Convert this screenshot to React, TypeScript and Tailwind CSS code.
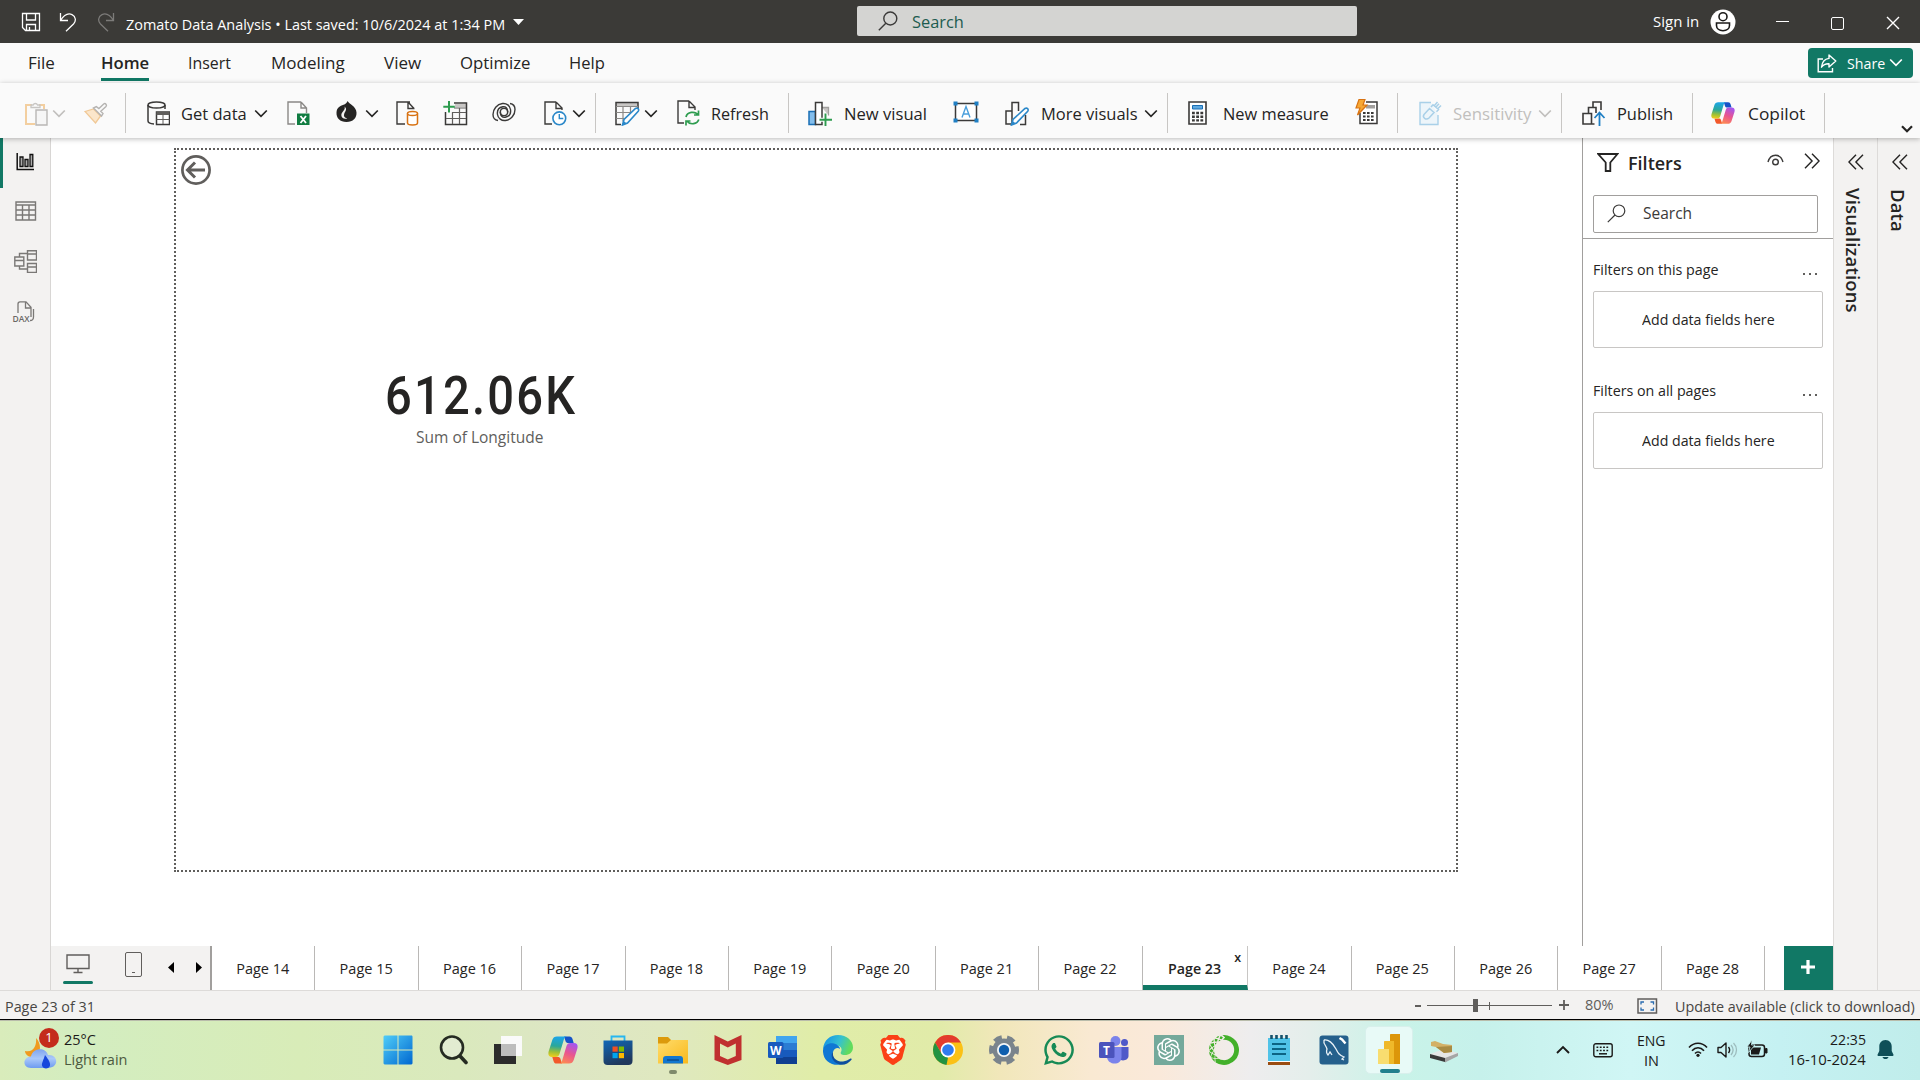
import React, { useLayoutEffect, useRef, useState } from "react";
import { SiOpenai, SiBrave, SiAnaconda } from "react-icons/si";
import { FaWhatsapp } from "react-icons/fa";

/* Text squeezed or stretched to the width its class gives. */
function T({ className = "", children }: { className?: string; children: React.ReactNode }) {
  const outer = useRef<HTMLSpanElement>(null);
  const inner = useRef<HTMLSpanElement>(null);
  const [k, setK] = useState(1);
  useLayoutEffect(() => {
    if (outer.current && inner.current) setK(outer.current.clientWidth / inner.current.offsetWidth);
  }, []);
  return (
    <span ref={outer} className={"block shrink-0 whitespace-nowrap " + className}>
      <span ref={inner} className="inline-block origin-left" style={{ transform: `scaleX(${k})` }}>
        {children}
      </span>
    </span>
  );
}

type IconProps = { w: number; h: number; className?: string; children: React.ReactNode };
function Svg({ w, h, className = "", children }: IconProps) {
  return (
    <svg width={w} height={h} viewBox={`0 0 ${w} ${h}`} fill="none" className={"block shrink-0 " + className}>
      {children}
    </svg>
  );
}

function Chevron({ className = "", color = "#252423" }: { className?: string; color?: string }) {
  return (
    <Svg w={14} h={9} className={className}>
      <path d="M1.2 1.5 7 7.3l5.8-5.8" stroke={color} strokeWidth="1.7" />
    </Svg>
  );
}
function Sep({ className = "" }: { className?: string }) {
  return <div className={"h-10 w-px shrink-0 bg-[#c8c6c4] " + className} />;
}

function CopilotIcon({ size, id, className = "" }: { size: number; id: string; className?: string }) {
  return (
    <svg width={size} height={size} viewBox="0 0 30 30" className={"block shrink-0 " + className}>
      <defs>
        <linearGradient id={id + "a"} x1="0.3" y1="0" x2="0.2" y2="1">
          <stop offset="0" stopColor="#1ca5e8" />
          <stop offset="0.45" stopColor="#2aa79b" />
          <stop offset="0.75" stopColor="#9fc035" />
          <stop offset="1" stopColor="#f5cf1a" />
        </linearGradient>
        <linearGradient id={id + "b"} x1="0.7" y1="0" x2="0.3" y2="1">
          <stop offset="0" stopColor="#a456f0" />
          <stop offset="0.5" stopColor="#e9558f" />
          <stop offset="1" stopColor="#fd8a52" />
        </linearGradient>
      </defs>
      <path d="M16 1.5h5.4c1.8 0 2.6 1 3.1 2.6l1.2 4h-5.2c-1.6 0-2.6-.5-3-2z" fill="#1652c8" />
      <path d="M14 28.5H8.6c-1.8 0-2.6-1-3.1-2.6l-1.2-4h5.2c1.6 0 2.6.5 3 2z" fill="#f2592b" />
      <path d="M9 1.5h10c-1.700 0-2.500 1-3 2.600L11.500 19c-.6 2-1.800 3-3.700 3H4C.8 22-.2 19.600.7 16.300L4.300 5C5.100 2.600 6.500 1.500 9 1.500z" fill={`url(#${id}a)`} />
      <path d="M21 28.500H11c1.700 0 2.500-1 3-2.600L18.500 11c.6-2 1.800-3 3.700-3H26c3.200 0 4.200 2.400 3.300 5.700L25.700 25c-.8 2.400-2.200 3.500-4.700 3.500z" fill={`url(#${id}b)`} />
    </svg>
  );
}

function TitleBar() {
  return (
    <header className="flex h-[43px] shrink-0 items-center bg-[#3b3a37] text-white">
      <Svg w={20} h={20} className="ml-[21px]">
        <path d="M1.500 1.500h17v17h-14l-3-3zM5.500 1.500v6.500h9V1.500M5.500 18.500v-6h9v6M8.500 18v-3" stroke="#fff" strokeWidth="1.300" />
      </Svg>
      <Svg w={18} h={20} className="ml-[18px]">
        <path d="M1.500 1v7.500H9M1.500 8.500C5 3 9 .8 13 2.600c4 2 4.300 6.500 1.500 9.400L7 19.300" stroke="#fff" strokeWidth="1.300" />
      </Svg>
      <Svg w={18} h={20} className="ml-5">
        <path d="M16.500 1v7.500H9M16.500 8.500C13 3 9 .8 5 2.600c-4 2-4.300 6.500-1.500 9.400L11 19.300" stroke="#7c7b79" strokeWidth="1.300" />
      </Svg>
      <T className="mt-[7px] ml-[11px] w-[379px] text-[14.5px]">Zomato Data Analysis • Last saved: 10/6/2024 at 1:34 PM</T>
      <Svg w={11} h={6} className="ml-2">
        <path d="M0 0h11L5.500 6z" fill="#fff" />
      </Svg>
      <div className="mb-px ml-[333px] flex h-[30px] w-[500px] shrink-0 items-center rounded-[2px] bg-[#d4d4d2]">
        <Svg w={20} h={20} className="ml-[21px]">
          <circle cx="12.300" cy="7.500" r="6.500" stroke="#3b3a39" strokeWidth="1.400" />
          <path d="M7.800 12.200.8 19.300" stroke="#3b3a39" strokeWidth="1.400" />
        </Svg>
        <T className="mt-px ml-[14px] w-[52px] text-[17px] text-[#1d5c4f]">Search</T>
      </div>
      <T className="ml-[296px] w-[46px] text-[15px]">Sign in</T>
      <Svg w={26} h={26} className="ml-[11px]">
        <circle cx="13" cy="13" r="12.500" fill="#fff" />
        <circle cx="13" cy="7.700" r="4" stroke="#1b1a19" strokeWidth="1.600" />
        <path d="M6.500 14h13v2.500c0 3-2.600 5.200-6.500 5.200s-6.500-2.200-6.500-5.200z" stroke="#1b1a19" strokeWidth="1.600" />
      </Svg>
      <div className="ml-10 h-[1.500px] w-[13px] shrink-0 bg-white" />
      <div className="mt-[3px] ml-[42px] h-[13px] w-[13px] shrink-0 rounded-[2px] border-[1.500px] border-white" />
      <Svg w={14} h={14} className="mt-[3px] ml-[42px]">
        <path d="M1 1l12 12M13 1 1 13" stroke="#fff" strokeWidth="1.400" />
      </Svg>
    </header>
  );
}

function MenuBar() {
  return (
    <nav className="flex h-10 shrink-0 bg-[#fafafa] pt-[8px] text-[17px] leading-[24px] text-[#252423]">
      <T className="ml-7 w-[27px]">File</T>
      <div className="ml-[46px] h-[30px] border-b-[3px] border-[#117865] font-semibold">
        <T className="w-[48px]">Home</T>
      </div>
      <T className="ml-[39px] w-[43px]">Insert</T>
      <T className="ml-10 w-[74px]">Modeling</T>
      <T className="ml-[39px] w-[37px]">View</T>
      <T className="ml-[39px] w-[71px]">Optimize</T>
      <T className="ml-[38px] w-[36px]">Help</T>
      <button className="-mt-[3px] mr-[7px] ml-auto flex h-[30px] w-[105px] items-center rounded-[4px] bg-[#117865] text-[15px] text-white">
        <Svg w={20} h={19} className="ml-[9px]">
          <path d="M6 5H1.200v12.800h14.300V14" stroke="#fff" strokeWidth="1.400" />
          <path d="M12 1l6.800 6L12 13V9.800c-3.300-.2-5.600.8-7.500 3.400C5 8.500 7.500 5 12 4.400z" stroke="#fff" strokeWidth="1.400" strokeLinejoin="round" />
        </Svg>
        <T className="-mt-px ml-[10px] w-[38px] text-left">Share</T>
        <Chevron className="-mt-px ml-[4px]" color="#fff" />
      </button>
    </nav>
  );
}

function Toolbar() {
  return (
    <div className="relative z-10 flex h-[55px] shrink-0 items-center bg-[#fafafa] pt-[5px] text-[17px] text-[#252423] shadow-[0_1px_5px_rgba(0,0,0,0.28)]">
      <Svg w={23} h={25} className="ml-[25px]">
        <path d="M7 4H1v19h9M14 4h5v4" stroke="#f3cfa0" strokeWidth="2" />
        <path d="M6 6.500h9V4h-2.500a2.300 2.300 0 0 0-4.300 0H6z" stroke="#c8c6c4" strokeWidth="1.300" />
        <path d="M11 9h11v15H11z" fill="#f6f6f6" stroke="#b9b7b5" strokeWidth="1.400" />
      </Svg>
      <Chevron className="ml-[4px]" color="#c1bfbd" />
      <Svg w={24} h={22} className="ml-[18px]">
        <path d="M1 9.500 9.500 7l7 7-5 7z" fill="#fbe6cb" stroke="#f0c896" strokeWidth="1.300" />
        <path d="m9.500 6 8 8 1.500-2.500-2.200-2.200L22 4.500c1.300-1.500-.6-3.800-2.300-2.500l-4.800 4.600-2.600-2z" fill="#fafafa" stroke="#b5b3b1" strokeWidth="1.400" />
      </Svg>
      <Sep className="ml-[17px]" />
      <Svg w={23} h={25} className="ml-[21px]">
        <ellipse cx="9.500" cy="4" rx="8.500" ry="3" stroke="#3b3a39" strokeWidth="1.500" />
        <path d="M1 4v16c0 1.500 2.500 2.800 6 3M18 4v4" stroke="#3b3a39" strokeWidth="1.500" />
        <path d="M9.500 11h13v12.500h-13z" fill="#fff" stroke="#3b3a39" strokeWidth="1.500" />
        <path d="M9.500 11h13v3h-13z" fill="#605e5c" />
        <path d="M16 14v9M9.500 18.500h13" stroke="#605e5c" />
      </Svg>
      <T className="mt-[2px] ml-[11px] w-[66px]">Get data</T>
      <Chevron className="ml-[7px]" />
      <Svg w={23} h={25} className="ml-[19px]">
        <path d="M14 1H1v22h7M14 1v6h5.500M14 1l5.500 6v5" stroke="#8a8886" strokeWidth="1.400" />
        <path d="M10 12.500h12.500V24H10z" fill="#107c41" />
        <path d="m13.500 15 5.500 7M19 15l-5.500 7" stroke="#fff" strokeWidth="1.800" />
      </Svg>
      <Svg w={21} h={22} className="-mt-[2px] ml-[26px]">
        <path d="M11.500 0c1.500 3 8.500 5 9 11.500.3 5.500-3.500 9.500-10 9.500S.2 17 .5 11.500C.8 6.500 4 5 7.500 3.800 9.500 3 11 2 11.500 0z" fill="#252423" />
        <path d="M8.500 5.500c1.500 3.500-3 5-3.200 8.500-.1 3 3 4.500 6 3.500-3-.7-4-2.500-3-5C9.500 10 11.500 8 8.500 5.500z" fill="#f3f2f1" />
      </Svg>
      <Chevron className="ml-2" />
      <Svg w={23} h={25} className="ml-[17px]">
        <path d="M14 1H1v22h8M12 1v6.500h6.500M12 1l6 6.500" stroke="#3b3a39" strokeWidth="1.400" />
        <path d="M11.500 12.500V22c0 2.600 10 2.600 10 0v-9.500" fill="#fff" stroke="#d87212" strokeWidth="1.500" />
        <ellipse cx="16.500" cy="12.500" rx="5" ry="2" fill="#fff" stroke="#d87212" strokeWidth="1.500" />
      </Svg>
      <Svg w={25} h={25} className="ml-[24px]">
        <path d="M12 3h11v3H12z" fill="#c8c6c4" />
        <path d="M11 2h12.500v21.500h-21V11" stroke="#3b3a39" strokeWidth="1.500" />
        <path d="M11 7h12M9 11.500h14M3 17.500h20M9.500 11v12M16.500 7v16" stroke="#605e5c" strokeWidth="1.200" />
        <path d="M6 0v11.500M.3 5.800h11.500" stroke="#2e9c4f" strokeWidth="2" />
      </Svg>
      <Svg w={24} h={20} className="-mt-[3px] ml-[24px]">
        <circle cx="12" cy="10" r="3.700" stroke="#3b3a39" strokeWidth="1.500" />
        <path d="M15.700 10c0-4-2-5.800-5-5.300C6.500 5.500 5 9 5.500 12.500c.5 4 4 6.500 8 6 5.500-.7 9.500-5.500 9.500-11 0-3.500-1.800-5.500-5-6" stroke="#3b3a39" strokeWidth="1.400" />
        <path d="M8.300 10c0 4 2 5.800 5 5.300 4.200-.8 5.700-4.300 5.200-7.800-.5-4-4-6.500-8-6C5 2.200 1 7 1 12.500c0 3.500 1.800 5.500 5 6" stroke="#3b3a39" strokeWidth="1.400" />
      </Svg>
      <Svg w={23} h={25} className="ml-[28px]">
        <path d="M12 1H1v22h7M12 1v6.500h5.500M12 1l6 6v2" stroke="#3b3a39" strokeWidth="1.400" />
        <circle cx="15.300" cy="17.300" r="6.400" fill="#fff" stroke="#2b88c9" strokeWidth="1.600" />
        <path d="M15.300 13v4.500h4" stroke="#2b88c9" strokeWidth="1.400" />
      </Svg>
      <Chevron className="ml-[5px]" />
      <Sep className="ml-[9px]" />
      <Svg w={25} h={25} className="ml-[19px]">
        <TableEdit />
      </Svg>
      <Chevron className="ml-[4px]" />
      <Svg w={23} h={26} className="ml-[19px]">
        <path d="M12 1H1v22h6M12 1v6.500h5.500M12 1l6 6v3" stroke="#3b3a39" strokeWidth="1.400" />
        <path d="M9 17c1-5 9-6.500 12-2M21.500 10.500V15H17M21.800 19.500c-1.500 4.500-8.500 6-12 1.500M9 25.500V21h4.500" stroke="#2e9c4f" strokeWidth="1.700" />
      </Svg>
      <T className="mt-[2px] ml-[11px] w-[58px]">Refresh</T>
      <Sep className="ml-[19px]" />
      <Svg w={25} h={25} className="ml-[19px]">
        <path d="M1 10.500h6.500v13H1z" fill="#83beec" stroke="#1a6fb5" strokeWidth="1.500" />
        <path d="M14 6.500h6.500v8" fill="#c8c6c4" stroke="#a19f9d" strokeWidth="1.300" />
        <path d="M7.500 1.500H14v22H7.500z" fill="#fff" stroke="#3b3a39" strokeWidth="1.500" />
        <path d="M17.500 12.500V25M11.500 18.700h13" stroke="#fafafa" strokeWidth="4" />
        <path d="M17.500 12.500V25M11.500 18.700H24" stroke="#2e9c4f" strokeWidth="1.900" />
      </Svg>
      <T className="mt-[2px] ml-[11px] w-[83px]">New visual</T>
      <Svg w={26} h={22} className="-mt-[2px] ml-[26px]">
        <path d="M2.500 2.500h21v17h-21z" fill="#fff" stroke="#3b3a39" strokeWidth="1.500" />
        <path d="M.5.5h4v4h-4zM21.500.5h4v4h-4zM.5 17.500h4v4h-4zM21.500 17.500h4v4h-4z" fill="#1f7fc4" />
        <path d="M9 16.500 13 5.500l4 11M10.300 13h5.400" stroke="#4a9edb" strokeWidth="1.400" />
      </Svg>
      <Svg w={24} h={25} className="ml-[26px]">
        <path d="M7 10H1v13h6" stroke="#3b3a39" strokeWidth="1.500" />
        <path d="M7 23V1.500h6.500V10M15 23.500h5.500V14" stroke="#3b3a39" strokeWidth="1.500" />
        <path d="m6.500 24 1.500-5.500L20 7.500c2-1.300 4 .8 2.700 2.800L11.500 22z" fill="#fff" stroke="#2b88c9" strokeWidth="1.600" />
        <path d="m6.500 24 1-4 3.500 2.500z" fill="#2b88c9" />
      </Svg>
      <T className="mt-[2px] ml-[12px] w-[97px]">More visuals</T>
      <Chevron className="ml-[6px]" />
      <Sep className="ml-[9px]" />
      <Svg w={19} h={24} className="ml-[20px]">
        <Calc />
      </Svg>
      <T className="mt-[2px] ml-[16px] w-[106px]">New measure</T>
      <Svg w={23} h={26} className="-mt-[2px] ml-[26px]">
        <path d="M11 3h11v21.500H5V14" fill="#fff" stroke="#3b3a39" strokeWidth="1.500" />
        <path d="M11 6h9v3.500h-9z" fill="#a19f9d" />
        <path d="M8 14h11M8 17.500h11M8 21h11" stroke="#3b3a39" strokeWidth="2.200" strokeDasharray="2.600 1.400" />
        <path d="M4 .5h6L8 6h4L2.500 16 5 9H1z" fill="#f7a834" stroke="#d87212" strokeWidth="1.200" />
      </Svg>
      <Sep className="ml-[19px]" />
      <Svg w={23} h={25} className="ml-[21px]">
        <path d="M12 1.500H1v22h18V14" fill="#edf5fa" stroke="#a9d0e8" strokeWidth="1.400" />
        <path d="m5 13.500 5.500-6 4.500 4-5 5.500c-3 2.500-7-.5-5-3.500zM12 6l2-2.300 5.500 4.800-2 2.300M15.500 4.500l3-3.500M19 7.500l3-3M17 6l3-3.300" stroke="#a9d0e8" strokeWidth="1.500" />
      </Svg>
      <T className="mt-[2px] ml-[11px] w-[78px] text-[#c1bfbd]">Sensitivity</T>
      <Chevron className="ml-[7px]" color="#c1bfbd" />
      <Sep className="ml-[9px]" />
      <Svg w={24} h={25} className="ml-5">
        <path d="M1 12.500h8.500V23H1zM6.500 12V6.500H14V12M11 6V1h8v8M9.500 23h3" stroke="#3b3a39" strokeWidth="1.600" />
        <path d="M17.500 25V12M12.500 17l5-5.500 5 5.500" stroke="#1f7fc4" strokeWidth="1.800" />
      </Svg>
      <T className="mt-[2px] ml-[11px] w-[56px]">Publish</T>
      <Sep className="ml-[19px]" />
      <CopilotIcon size={24} id="cr" className="ml-[18px]" />
      <T className="mt-[2px] ml-[13px] w-[57px]">Copilot</T>
      <Sep className="ml-[19px]" />
      <Svg w={12} h={8} className="mt-[31px] ml-[76px]">
        <path d="M1 1.200 6 6.200l5-5" stroke="#252423" strokeWidth="2.200" />
      </Svg>
    </div>
  );
}

function TableEdit() {
  return (
    <>
      <path d="M1 1.500h22v4H1z" fill="#c8c6c4" />
      <path d="M23 8V1.500H1V23.500h5" stroke="#3b3a39" strokeWidth="1.500" />
      <path d="M1 5.500h22M1 11.500h15M1 17.500h9M8 5.500v15M15.500 5.500v7" stroke="#8a8886" strokeWidth="1.200" />
      <path d="m7.500 24 1.500-5.500L20.500 7.500c2-1.300 4 .8 2.700 2.800L12.500 22z" fill="#fff" stroke="#2b88c9" strokeWidth="1.600" />
      <path d="m7.500 24 1-4 3.500 2.500z" fill="#2b88c9" />
    </>
  );
}
function Calc() {
  return (
    <>
      <path d="M1 1h17v22H1z" fill="#fff" stroke="#3b3a39" strokeWidth="1.600" />
      <path d="M4.500 4.500h10v3.500h-10z" fill="#5ea9e0" stroke="#1a6fb5" />
      <path d="M4 12h11.500M4 15.700h11.500M4 19.400h11.500" stroke="#3b3a39" strokeWidth="2.400" strokeDasharray="2.800 1.400" />
    </>
  );
}

function Rail() {
  return (
    <aside className="flex w-[51px] shrink-0 flex-col border-r border-[#d8d6d4] bg-[#f3f2f1]">
      <div className="flex h-[50px] shrink-0 border-l-[3px] border-[#117865]">
        <Svg w={19} h={19} className="mt-[14px] ml-[13px]">
          <path d="M1.200 1v16.500H18" stroke="#111" strokeWidth="1.500" />
          <path d="M4 5h3v9.500H4zM9 7.500h3v7H9zM14 2.500h2.800v12H14z" fill="#aaa" stroke="#111" strokeWidth="1.300" />
        </Svg>
      </div>
      <Svg w={22} h={20} className="mt-[13px] ml-[15px]">
        <path d="M1 1h19.500v18H1zM1 4h19.500M1 9h19.500M1 14h19.500M7.500 4v15M14 4v15" stroke="#7a7876" strokeWidth="1.400" />
      </Svg>
      <Svg w={23} h={23} className="mt-[29px] ml-[14px]">
        <path d="M.8 7h9v9h-9zM.8 10.500h9M13.500.8h9V10h-9zM13.500 4h9M13.500 13.500h9v9h-9zM13.500 17h9M5.500 7V3.500h8M5.500 16v3h8" stroke="#7a7876" strokeWidth="1.400" />
      </Svg>
      <Svg w={24} h={22} className="mt-[28px] ml-[12px]">
        <path d="M6 12V3c0-1.500.8-2.200 2-2.200h6l5 5.500V16M13.500 1v6H19M21.500 8v8c0 2-1.500 3.500-3.500 3.500" stroke="#7a7876" strokeWidth="1.300" />
        <text x="0.500" y="20.500" fontSize="8.500" textLength="17" fontFamily="Open Sans" fontWeight="600" fill="#6a6866">DAX</text>
      </Svg>
    </aside>
  );
}

function Canvas() {
  return (
    <main className="flex flex-1 bg-white pt-[10px] pl-[123px]">
      <section className="h-[724px] w-[1284px] border-2 border-dotted border-[#605e5c]">
        <Svg w={30} h={30} className="mt-[5px] ml-[5px]">
          <circle cx="15" cy="15" r="13.600" stroke="#605e5c" strokeWidth="2.700" />
          <path d="M24 15H6.500M14 7.500 6.500 15l7.500 7.500" stroke="#605e5c" strokeWidth="3" />
        </Svg>
        <div className="mt-[179px] ml-[184px] flex w-[242px] flex-col items-center">
          <div className="font-['Roboto'] text-[53px] leading-[64px] font-medium tracking-[2.500px] text-[#252423]">
            <T className="w-[192px]">612.06K</T>
          </div>
          <T className="-mt-[2px] mr-[3px] w-[127px] text-[15.500px] leading-[22px] text-[#605e5c]">Sum of Longitude</T>
        </div>
      </section>
    </main>
  );
}

function DoubleChevron({ left = false, className = "" }: { left?: boolean; className?: string }) {
  return (
    <Svg w={16} h={16} className={className}>
      <path d={left ? "M8 .7.9 8 8 15.300M15 .7 7.900 8l7.100 7.300" : "M8 .7 15.100 8 8 15.300M1 .7 8.100 8 1 15.300"} stroke="#252423" strokeWidth="1.400" />
    </Svg>
  );
}

function FilterGroup({ title, top }: { title: string; top: string }) {
  return (
    <div className={top}>
      <div className="flex h-[22px] items-center justify-between pr-[5px] text-[14.5px] text-[#252423]">
        <T className={title === "Filters on this page" ? "w-[125px]" : "w-[123px]"}>{title}</T>
        <div className="mt-[7px] flex gap-1 pr-px">
          <i className="size-[2px] bg-[#605e5c]" />
          <i className="size-[2px] bg-[#605e5c]" />
          <i className="size-[2px] bg-[#605e5c]" />
        </div>
      </div>
      <div className="mt-[10px] flex h-[57px] items-center justify-center rounded-[2px] border border-[#c8c6c4] pt-px text-[14.5px] text-[#252423]">
        <T className="w-[133px]">Add data fields here</T>
      </div>
    </div>
  );
}

function Filters() {
  return (
    <aside className="w-[251px] shrink-0 border-l border-[#a19f9d] bg-white">
      <div className="flex h-[57px] items-start pt-[15px] pl-[14px]">
        <Svg w={22} h={19}>
          <path d="M1.200 1h19.300l-7.200 8.500V18H8.700V9.500z" stroke="#252423" strokeWidth="1.800" />
        </Svg>
        <T className="-mt-[3px] ml-[9px] w-[54px] text-[18px] leading-[26px] font-semibold text-[#252423]">Filters</T>
        <Svg w={17} h={12} className="mt-px ml-[85px]">
          <path d="M1 8C3.500-1 13.500-1 16 8" stroke="#3b3a39" strokeWidth="1.400" />
          <circle cx="8.500" cy="8" r="2.800" stroke="#3b3a39" strokeWidth="1.400" />
        </Svg>
        <DoubleChevron className="ml-5" />
      </div>
      <div className="h-[44px] border-b border-[#a19f9d] pl-[10px]">
        <div className="flex h-[38px] w-[225px] items-center rounded-[2px] border border-[#a19f9d]">
          <Svg w={19} h={19} className="-mt-px ml-[13px]">
            <circle cx="12" cy="6.800" r="5.800" stroke="#3b3a39" strokeWidth="1.200" />
            <path d="M8 11 .8 18.200" stroke="#3b3a39" strokeWidth="1.200" />
          </Svg>
          <T className="-mt-px ml-[17px] w-[49px] text-[15.500px] text-[#3b3a39]">Search</T>
        </div>
      </div>
      <div className="pr-[10px] pl-[10px]">
        <FilterGroup title="Filters on this page" top="pt-5" />
        <FilterGroup title="Filters on all pages" top="pt-[32px]" />
      </div>
    </aside>
  );
}

const PAGES = [14, 15, 16, 17, 18, 19, 20, 21, 22, 23, 24, 25, 26, 27, 28];

function Tabs() {
  return (
    <div className="flex h-[44px] shrink-0 bg-white text-[14.5px] text-[#252423]">
      <div className="flex w-[161px] shrink-0 border-r-2 border-[#a19f9d] bg-[#f3f2f1]">
        <div className="ml-[12px] flex w-[30px] flex-col items-center">
          <Svg w={24} h={20} className="mt-[8px]">
            <path d="M1 1h22v13.500H1zM12 14.500v4M7.500 18.500h9" stroke="#605e5c" strokeWidth="1.400" />
          </Svg>
          <div className="mt-[7px] h-[3px] w-[30px] rounded-full bg-[#117865]" />
        </div>
        <div className="mt-[6px] ml-[32px] flex h-[25px] w-[17px] items-end justify-center rounded-[2px] border-[1.500px] border-[#605e5c] pb-[3px]">
          <div className="h-[1.500px] w-[3px] bg-[#605e5c]" />
        </div>
        <Svg w={6} h={11} className="mt-[16px] ml-[26px]">
          <path d="M6 0v11L0 5.500z" fill="#000" />
        </Svg>
        <Svg w={6} h={11} className="mt-[16px] ml-[22px]">
          <path d="M0 0v11l6-5.500z" fill="#000" />
        </Svg>
      </div>
      {PAGES.map((n) =>
        n === 23 ? (
          <div key={n} className="relative flex w-[105.500px] shrink-0 justify-center border-r border-b-[5px] border-r-[#c8c6c4] border-b-[#117865] pt-[12px] pr-px leading-[22px] font-semibold">
            <T className="w-[53px]">Page 23</T>
            <span className="absolute top-[2px] right-[6px] text-[12.500px] leading-[20px]">x</span>
          </div>
        ) : (
          <div key={n} className="flex w-[103.420px] shrink-0 justify-center border-r border-[#bab8b6] pt-[12px] pr-px leading-[22px]">
            <T className="w-[53px]">Page {n}</T>
          </div>
        )
      )}
      <div className="ml-auto flex w-[49px] shrink-0 items-center justify-center bg-[#117865] pr-px">
        <Svg w={14} h={14} className="-mt-[3px]">
          <path d="M7 0v14M0 7h14" stroke="#fff" strokeWidth="3.200" />
        </Svg>
      </div>
    </div>
  );
}

function Collapsed({ label, className }: { label: React.ReactNode; className: string }) {
  return (
    <aside className={"flex shrink-0 flex-col border-l border-[#dddbd9] bg-[#f3f2f1] text-[#252423] " + className}>
      <DoubleChevron left className="mt-[16px] ml-[13.500px]" />
      {label}
    </aside>
  );
}

function StatusBar() {
  return (
    <footer className="flex h-[29px] shrink-0 items-center border-t border-[#dddbd9] bg-[#f3f2f1] pt-[3px] text-[15px] text-[#605e5c]">
      <T className="ml-[5px] w-[90px] text-[#484644]">Page 23 of 31</T>
      <div className="-mt-[2px] ml-[1320px] h-[2px] w-[6px] shrink-0 bg-[#605e5c]" />
      <div className="-mt-[2px] ml-[6px] flex h-[14px] w-[125px] shrink-0 items-center">
        <div className="h-px w-[46px] bg-[#605e5c]" />
        <div className="h-[13px] w-[5px] bg-[#605e5c]" />
        <div className="h-px w-[11px] bg-[#605e5c]" />
        <div className="h-[8px] w-px bg-[#605e5c]" />
        <div className="h-px flex-1 bg-[#605e5c]" />
      </div>
      <Svg w={10} h={10} className="-mt-[3px] ml-[7px]">
        <path d="M5 0v10M0 5h10" stroke="#605e5c" strokeWidth="1.800" />
      </Svg>
      <T className="-mt-[4px] ml-4 w-[29px]">80%</T>
      <Svg w={21} h={16} className="-mt-px ml-[23px]">
        <path d="M1 1h18.500v14H1z" stroke="#605e5c" strokeWidth="1.500" />
        <path d="M4 6.500V4h3M13.500 4h3v2.500M16.500 9.500V12h-3M7 12H4V9.500" stroke="#2b6cb0" strokeWidth="1.300" />
      </Svg>
      <T className="ml-[17px] w-[240px] text-[#484644]">Update available (click to download)</T>
    </footer>
  );
}

function Weather() {
  return (
    <div className="flex w-[360px] shrink-0 items-center pl-[24px]">
      <div className="relative -mt-[2px]">
        <Svg w={34} h={42}>
          <defs>
            <linearGradient id="cloud" x1="0" y1="0" x2="0" y2="1">
              <stop offset="0" stopColor="#7fa4ee" />
              <stop offset="0.500" stopColor="#a9c8fa" />
              <stop offset="1" stopColor="#6d9bf0" />
            </linearGradient>
          </defs>
          <path d="M12 9c5 5 6 14-1 19C6 29 1 26 1 22c8 2 12-5 11-13z" fill="#f09a1e" />
          <path d="M7 39c-9 0-8.500-11 0-11.500C9 18 22 18 24 26c10-1 11.500 12 1 13z" fill="url(#cloud)" />
          <path d="M21 26c4 5 5.500 8 5 10.500-1 4-7 4-8 0-.4-2.500 1.500-5.500 3-10.500z" fill="#1747dc" />
        </Svg>
        <span className="absolute -top-px left-[15px] flex size-5 items-center justify-center rounded-full bg-[#c42b1c] text-[13px] text-white">1</span>
      </div>
      <div className="-mt-[2px] ml-[6px] text-[14.5px] leading-5 text-[#1b1a19]">
        <T className="w-[32px]">25°C</T>
        <T className="w-[63px] text-[#4c5a40]">Light rain</T>
      </div>
    </div>
  );
}

function TaskIcons() {
  return (
    <>
      <Svg w={30} h={30}>
        <defs>
          <linearGradient id="win" x1="0" y1="0" x2="1" y2="1">
            <stop offset="0" stopColor="#4fcdf8" />
            <stop offset="1" stopColor="#0067d0" />
          </linearGradient>
        </defs>
        <path d="M1.500.5h13v14H.5v-13zM15.500.5h13.500l.5 1v13h-14zM.5 15.500h14v14h-13l-1-1zM15.500 15.500h14v13l-1 1h-13z" fill="url(#win)" />
      </Svg>
      <Svg w={30} h={30}>
        <circle cx="14" cy="12.500" r="11" fill="#e8eedd" fillOpacity=".6" stroke="#252b22" strokeWidth="2.600" />
        <path d="m22 21 6 6.500" stroke="#252b22" strokeWidth="3.600" strokeLinecap="round" />
      </Svg>
      <Svg w={30} h={30}>
        <path d="M1 9h22v20H1z" fill="#2c2c2c" />
        <path d="M8 1h21v20H8z" fill="#fafafa" />
        <path d="M8 9h15v12H8z" fill="#bdbdbd" />
      </Svg>
      <CopilotIcon size={30} id="ct" />
      <Svg w={30} h={30}>
        <defs>
          <linearGradient id="store" x1="0" y1="0" x2="0.400" y2="1">
            <stop offset="0" stopColor="#1068b8" />
            <stop offset="1" stopColor="#20385c" />
          </linearGradient>
        </defs>
        <path d="M8.500 6V1.500h13V6" stroke="#27b7f0" strokeWidth="1.800" />
        <path d="M.5 5.500h29V26c0 2.500-1.500 4-4 4h-21c-2.500 0-4-1.500-4-4z" fill="url(#store)" />
        <path d="M9.500 11.500h5.200v5.200H9.500z" fill="#f25022" />
        <path d="M15.800 11.500H21v5.200h-5.200z" fill="#7fba00" />
        <path d="M9.500 18h5.200v5.200H9.500z" fill="#00a4ef" />
        <path d="M15.800 18H21v5.200h-5.200z" fill="#ffb900" />
      </Svg>
      <div className="relative">
        <Svg w={30} h={30}>
          <defs>
            <linearGradient id="fold" x1="0" y1="0" x2="1" y2="1">
              <stop offset="0" stopColor="#ffdc6b" />
              <stop offset="1" stopColor="#f9b91c" />
            </linearGradient>
          </defs>
          <path d="M0 2h10l3 3v6H0z" fill="#dc9a0c" />
          <path d="M0 8.500h9L13 5h17v23.500H0z" fill="url(#fold)" />
          <path d="M5 28.500V24c0-2 1-3 3-3h14c2 0 3 1 3 3v4.500z" fill="#1277cf" />
          <path d="M9 25h12" stroke="#0b4d8f" strokeWidth="1.500" />
        </Svg>
        <span className="absolute top-[35px] left-[11px] h-1 w-2 rounded-full bg-[#7f8a6c]" />
      </div>
      <Svg w={30} h={30}>
        <path d="m1.500 0 13.300 6.500L28.500 0v25l-13.700 5L1.500 25z" fill="#c0302f" />
        <path d="m7 8.500 7.800 4 8-4V21l-8 3.500L7 21z" fill="#e0e9b3" />
      </Svg>
      <Svg w={30} h={30}>
        <path d="M8 1h21v7H8z" fill="#41a5ee" />
        <path d="M8 8h21v7H8z" fill="#2b7cd3" />
        <path d="M8 15h21v7H8z" fill="#185abd" />
        <path d="M8 22h21v7H8z" fill="#103f91" />
        <rect x="0" y="7" width="15.500" height="16" rx="1.500" fill="#185abd" />
        <text x="2" y="19.500" fontSize="12" fontWeight="700" fontFamily="Open Sans" fill="#fff">W</text>
      </Svg>
      <Svg w={30} h={30}>
        <defs>
          <linearGradient id="edge1" x1="0" y1="0" x2="1" y2="0.300">
            <stop offset="0.200" stopColor="#1b9de2" />
            <stop offset="0.600" stopColor="#35c1d0" />
            <stop offset="1" stopColor="#62dc5c" />
          </linearGradient>
        </defs>
        <path d="M0 14C1 5 7 0 15 0c9 0 15 6 15 12.500 0 5-4 7.500-8 7.500-4 0-5-1.500-4-3 1.500-3 0-6-4-6.500C9 10 4 11 0 14z" fill="url(#edge1)" />
        <path d="M0 15C1 10 6 7.500 11 8.500c4 1 6 3.500 6 5.500-2-2-6-1-7 3-1.500 6 3 11 8.500 12.500C8 31.500-.5 25 0 15z" fill="#0f78d4" />
        <path d="M10 17c-1 6 4 10 10 9.500 3-.3 5-1.500 7.500-3 1-.3 1.500.3 1 1.200C25.500 28.500 21 30.500 17 29.500 9 28 7 20 10 17z" fill="#0f4f9e" />
      </Svg>
      <div className="relative">
        <Svg w={30} h={30}>
          <path d="M9.500 1h11l3 3h2l1 3-1 2 1 2-3.500 12c-1 2-5.500 4.500-8 5-2.500-.5-7-3-8-5L3.500 11l1-2-1-2 1-3h2z" fill="#fff" />
        </Svg>
        <SiBrave size={30} color="#fb4016" className="absolute top-0 left-0" />
      </div>
      <Svg w={30} h={30}>
        <circle cx="15" cy="15" r="15" fill="#fbc116" />
        <path d="M2 7.500A15 15 0 0 1 28 7.500H15L8.500 18.500z" fill="#e33b2e" />
        <path d="M2 7.500 8.500 18.500l6.500 4-1.500 7.400A15 15 0 0 1 2 7.500z" fill="#229342" />
        <circle cx="15" cy="15" r="7.400" fill="#fff" />
        <circle cx="15" cy="15" r="5.800" fill="#2f7bee" />
      </Svg>
      <Svg w={30} h={30}>
        <circle cx="15" cy="15" r="12.400" stroke="#7a848c" strokeWidth="5.200" strokeDasharray="7.800 5.185" strokeDashoffset="3.900" />
        <circle cx="15" cy="15" r="9" stroke="#7a848c" strokeWidth="5" />
        <circle cx="15" cy="15" r="7" fill="#f2f4f6" />
        <circle cx="15" cy="15" r="5.200" fill="#0f5fae" />
      </Svg>
      <FaWhatsapp size={34} color="#178a56" className="-mx-[2px]" />
      <Svg w={30} h={30}>
        <circle cx="16.500" cy="6" r="5" fill="#7b83eb" />
        <circle cx="25.500" cy="7.500" r="3.500" fill="#5059c9" />
        <path d="M20 12h9.500v9c0 4-6 6-9.500 3z" fill="#5059c9" />
        <path d="M8 12h14.500v10c0 9-14 8.500-14.500 0z" fill="#7b83eb" />
        <rect x="0" y="7" width="15.500" height="16" rx="1.500" fill="#4b53bc" />
        <text x="4" y="19.500" fontSize="12" fontWeight="700" fontFamily="Open Sans" fill="#fff">T</text>
      </Svg>
      <div className="flex size-[30px] items-center justify-center bg-[#74a99b]">
        <SiOpenai size={23} color="#fff" />
      </div>
      <SiAnaconda size={30} color="#43b02a" />
      <Svg w={30} h={30}>
        <path d="M4 26h22v4H4z" fill="#9a4d12" />
        <path d="M4 25h22v2H4z" fill="#fff" />
        <path d="M4 3h22v23H4z" fill="#50c3e8" />
        <path d="M8 9h14M8 14h14M8 19h14" stroke="#0c6484" strokeWidth="2" />
        <path d="M7.500 0v4M12.500 0v4M17.500 0v4M22.500 0v4" stroke="#14526b" strokeWidth="2.600" />
      </Svg>
      <Svg w={30} h={30}>
        <rect x=".5" y=".5" width="29" height="29" rx="3" fill="#25608c" />
        <path d="M5 5c4-1 9 3 12 9 2 4 3 6 8 8l-2 2 2 1M5 5c-1 4 2 5 3 9-1 3 0 5 1 6l2-3 2 3" stroke="#e8f1f7" strokeWidth="1.300" />
        <path d="m20.500 3 2.500 1.500 3.500 4" stroke="#fff" strokeWidth="2.400" />
      </Svg>
      <div className="relative -mx-[9px] flex h-[48px] w-[48px] items-center justify-center rounded-[5px] border border-[#d8f0ec] bg-[#e8faf7]">
        <Svg w={22} h={30} className="-mt-px">
          <path d="M12 1c0-.6.400-1 1-1h9v30H12z" fill="#dc960a" />
          <path d="M6 8c0-.6.400-1 1-1h9v23H6z" fill="#efb92a" />
          <path d="M0 16c0-.6.400-1 1-1h10v15H0z" fill="#f8dd70" />
        </Svg>
        <span className="absolute bottom-0 left-[14px] h-1 w-5 rounded-full bg-[#21808d]" />
      </div>
      <Svg w={30} h={30}>
        <path d="m1 19 14-5 14 4-13 7.500z" fill="#e6e6e6" />
        <path d="m1 19 15 4v4L1 23z" fill="#3a3a3a" />
        <path d="m16 23 13-5v3l-13 6.500z" fill="#a5a5a5" />
        <path d="m2 7 4-1 8 3 9 1v7l-8 1-8-6-5-1z" fill="#d3b066" />
        <path d="m7 12 16-1v6l-8 1z" fill="#a98b43" />
      </Svg>
    </>
  );
}

function Taskbar() {
  return (
    <div className="flex h-[60px] shrink-0 items-center border-t border-[#b9bcab] bg-[linear-gradient(90deg,#d9ecbb_0px,#d3edc0_80px,#d8ecb8_300px,#dae9bd_460px,#dde6c4_560px,#dfe8c0_660px,#e0eda8_820px,#e1eba9_940px,#f1e7ba_1000px,#f9e9d2_1090px,#fae9da_1160px,#eeedee_1250px,#e4eeeb_1310px,#c9f3e8_1400px,#c6f1eb_1480px,#d0f6f5_1630px,#c5f1f2_1780px,#c0edeb_1920px)] text-[#1b1a19]">
      <Weather />
      <div className="-mt-[2px] ml-[23px] flex w-[1076px] shrink-0 items-center justify-between">
        <TaskIcons />
      </div>
      <Svg w={14} h={9} className="-mt-[2px] ml-[97px]">
        <path d="M1 8 7 2l6 6" stroke="#1b1a19" strokeWidth="1.900" />
      </Svg>
      <Svg w={20} h={15} className="-mt-px ml-[23px]">
        <rect x=".8" y=".8" width="18.400" height="13" rx="2" stroke="#1b1a19" strokeWidth="1.400" />
        <path d="M3.500 4.200h13M3.500 7.400h13" stroke="#1b1a19" strokeWidth="1.500" strokeDasharray="1.800 1.500" />
        <path d="M6 10.800h8" stroke="#1b1a19" strokeWidth="1.500" />
      </Svg>
      <div className="ml-[24px] flex flex-col items-center text-[14.5px] leading-5">
        <T className="w-[29px]">ENG</T>
        <T className="w-[15px]">IN</T>
      </div>
      <Svg w={20} h={15} className="-mt-[2px] ml-[22px]">
        <path d="M1 5.500C6-.2 14-.2 19 5.500M4 8.700c3.500-4 8.500-4 12 0M7 11.500c1.800-2 4.200-2 6 0" stroke="#1b1a19" strokeWidth="1.600" />
        <circle cx="10" cy="13.300" r="1.600" fill="#1b1a19" />
      </Svg>
      <Svg w={21} h={16} className="-mt-[2px] ml-[9px]">
        <path d="M1 5.500h3L9 1v14l-5-4.500H1z" stroke="#1b1a19" strokeWidth="1.400" strokeLinejoin="round" />
        <path d="M11.500 5c1.500 2 1.500 4 0 6" stroke="#1b1a19" strokeWidth="1.400" />
        <path d="M14 3c2.500 3 2.500 7 0 10M16.500 1c4 4 4 10 0 14" stroke="#9dbcbd" strokeWidth="1.300" />
      </Svg>
      <Svg w={21} h={18} className="-mt-[4px] ml-[9px]">
        <rect x="2" y="5" width="15.500" height="11.500" rx="2.500" stroke="#1b1a19" strokeWidth="1.500" />
        <path d="M4 7.500h10l-2 7H4z" fill="#1b1a19" />
        <path d="M18.500 8.500V13h1.500V8.500z" fill="#1b1a19" stroke="#1b1a19" />
        <path d="M5 0 0 7h3L1.500 12.500 8 5H4.500z" fill="#1b1a19" stroke="#c8f2f3" strokeWidth=".8" />
      </Svg>
      <div className="-mt-px ml-5 flex flex-col items-end text-[14.5px] leading-5">
        <T className="w-[36px]">22:35</T>
        <T className="w-[78px]">16-10-2024</T>
      </div>
      <Svg w={17} h={20} className="-mt-px ml-[11px]">
        <path d="M8.500 0C4.500 0 2.300 3 2.300 6.500V11L.5 14.800c-.2.700.2 1.200.8 1.200h14.400c.6 0 1-.5.800-1.200L14.700 11V6.500C14.700 3 12.500 0 8.500 0zM5.500 17c.5 1.500 1.500 2 3 2s2.500-.5 3-2z" fill="#0f4f58" />
      </Svg>
    </div>
  );
}

export default function App() {
  return (
    <div className="flex h-[1080px] w-[1920px] flex-col overflow-hidden bg-white font-['Open_Sans','Noto_Sans',sans-serif]">
      <TitleBar />
      <MenuBar />
      <Toolbar />
      <div className="flex h-[852px] shrink-0">
        <Rail />
        <div className="flex w-[1782px] shrink-0 flex-col">
          <div className="flex h-[808px] shrink-0">
            <Canvas />
            <Filters />
          </div>
          <Tabs />
        </div>
        <Collapsed
          className="w-[44px]"
          label={<span className="mt-[18px] ml-[6px] w-[26px] text-[18.500px] leading-[26px] font-semibold tracking-[0.150px] [writing-mode:vertical-rl]">Visualizations</span>}
        />
        <Collapsed
          className="w-[43px]"
          label={<span className="mt-[19px] ml-[7px] w-[26px] text-[18.500px] leading-[26px] font-semibold tracking-[0.150px] [writing-mode:vertical-rl]">Data</span>}
        />
      </div>
      <StatusBar />
      <div className="h-px shrink-0 bg-black" />
      <Taskbar />
    </div>
  );
}
